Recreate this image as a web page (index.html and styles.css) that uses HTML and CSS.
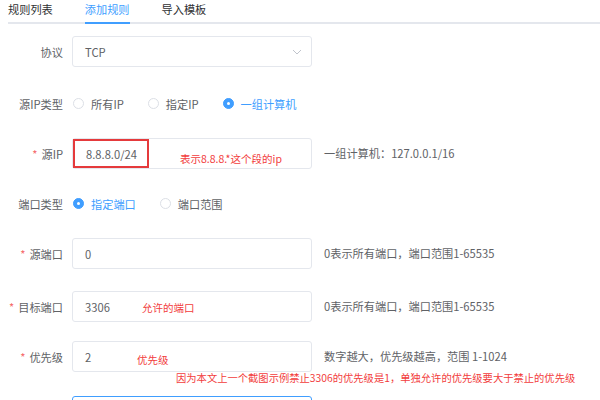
FILE: index.html
```html
<!DOCTYPE html>
<html lang="zh-CN">
<head>
<meta charset="utf-8">
<title>添加规则</title>
<link rel="stylesheet" href="styles.css">
</head>
<body>
<div class="tabs">
  <div class="tab">规则列表</div>
  <div class="tab active">添加规则</div>
  <div class="tab">导入模板</div>
</div>
<div class="form">
  <div class="row gap-21">
    <div class="label">协议</div>
    <div class="control">
      <div class="input select">
        <span>TCP</span>
        <svg class="chev" width="10" height="6" viewBox="0 0 10 6"><path d="M1 1 L5 5 L9 1" fill="none" stroke="#c0c4cc" stroke-width="1"/></svg>
      </div>
    </div>
  </div>
  <div class="row">
    <div class="label">源IP类型</div>
    <div class="radios">
      <span class="radio"><i class="dot"></i>所有IP</span>
      <span class="radio"><i class="dot"></i>指定IP</span>
      <span class="radio on"><i class="dot"></i>一组计算机</span>
    </div>
  </div>
  <div class="row">
    <div class="label"><span class="req">*</span>源IP</div>
    <div class="control">
      <div class="input"><span class="boxed">8.8.8.0/24</span></div>
      <span class="note note-ip">表示8.8.8.*这个段的ip</span>
    </div>
    <div class="hint">一组计算机：127.0.0.1/16</div>
  </div>
  <div class="row">
    <div class="label">端口类型</div>
    <div class="radios">
      <span class="radio on"><i class="dot"></i>指定端口</span>
      <span class="radio"><i class="dot"></i>端口范围</span>
    </div>
  </div>
  <div class="row gap-22">
    <div class="label"><span class="req">*</span>源端口</div>
    <div class="control">
      <div class="input"><span>0</span></div>
    </div>
    <div class="hint">0表示所有端口，端口范围1-65535</div>
  </div>
  <div class="row">
    <div class="label"><span class="req">*</span>目标端口</div>
    <div class="control">
      <div class="input"><span>3306</span></div>
      <span class="note note-port">允许的端口</span>
    </div>
    <div class="hint">0表示所有端口，端口范围1-65535</div>
  </div>
  <div class="row gap-24">
    <div class="label"><span class="req">*</span>优先级</div>
    <div class="control">
      <div class="input"><span>2</span></div>
      <span class="note note-pri">优先级</span>
      <span class="note note-long">因为本文上一个截图示例禁止3306的优先级是1，单独允许的优先级要大于禁止的优先级</span>
    </div>
    <div class="hint">数字越大，优先级越高，范围 1-1024</div>
  </div>
  <div class="row">
    <div class="label"></div>
    <div class="control">
      <div class="input focus"></div>
    </div>
  </div>
</div>
</body>
</html>
```
FILE: styles.css
```css
* { box-sizing: border-box; }
html, body { margin: 0; padding: 0; background: #fff; overflow: hidden; }
body {
  font-family: "Noto Sans CJK SC", "Liberation Sans", sans-serif;
  font-size: 11.2px;
  color: #606266;
}
.tabs {
  display: flex;
  margin-left: 8px;
  border-bottom: 2px solid #e4e7ed;
}
.tab {
  height: 24px;
  line-height: 18px;
  margin-right: 32px;
  margin-bottom: -2px;
  border-bottom: 2px solid transparent;
  color: #303133;
  padding-bottom: 4px;
}
.tab.active { color: #409eff; border-bottom-color: #409eff; }
.form { padding-top: 12px; }
.row {
  display: flex;
  align-items: center;
  height: 31px;
  margin-bottom: 19px;
}
.gap-21 { margin-bottom: 21px; }
.gap-22 { margin-bottom: 22px; }
.gap-24 { margin-bottom: 24px; }
.label {
  width: 64px;
  padding-right: 1px;
  margin-right: 8px;
  text-align: right;
  white-space: nowrap;
}
.req { color: #f56c6c; margin-right: 4px; }
.control { position: relative; width: 240px; height: 31px; flex: none; }
.input {
  height: 31px;
  border: 1px solid #e4e7ed;
  border-radius: 3px;
  padding-left: 12px;
  display: flex;
  align-items: center;
}
.input.focus { border-color: #409eff; }
.select { justify-content: space-between; padding-right: 9px; }
.chev { display: block; }
.boxed {
  margin-left: -12px;
  height: 29px;
  width: 76px;
  border: 2px solid #e53a3c;
  padding-left: 11px;
  display: flex;
  align-items: center;
}
.hint { margin-left: 12px; white-space: nowrap; padding-bottom: 2px; }
.radios { display: flex; align-items: center; padding-left: 1px; }
.radio { display: flex; align-items: center; margin-right: 24px; white-space: nowrap; }
.radio.on { color: #409eff; }
.dot {
  width: 11px; height: 11px;
  border: 1px solid #dcdfe6;
  border-radius: 50%;
  margin-right: 7px;
  position: relative;
}
.radio.on .dot { background: #409eff; border-color: #409eff; }
.radio.on .dot::after {
  content: "";
  position: absolute;
  left: 3px; top: 3px;
  width: 3px; height: 3px;
  border-radius: 50%;
  background: #fff;
}
.note {
  position: absolute;
  color: #f23c3c;
  font-size: 10.5px;
  line-height: 14px;
  white-space: nowrap;
}
.note-ip { left: 108px; top: 14px; }
.note-port { left: 70px; top: 10px; }
.note-pri { left: 65px; top: 12px; }
.note-long { left: 104px; top: 30px; font-size: 10.3px; }
```
